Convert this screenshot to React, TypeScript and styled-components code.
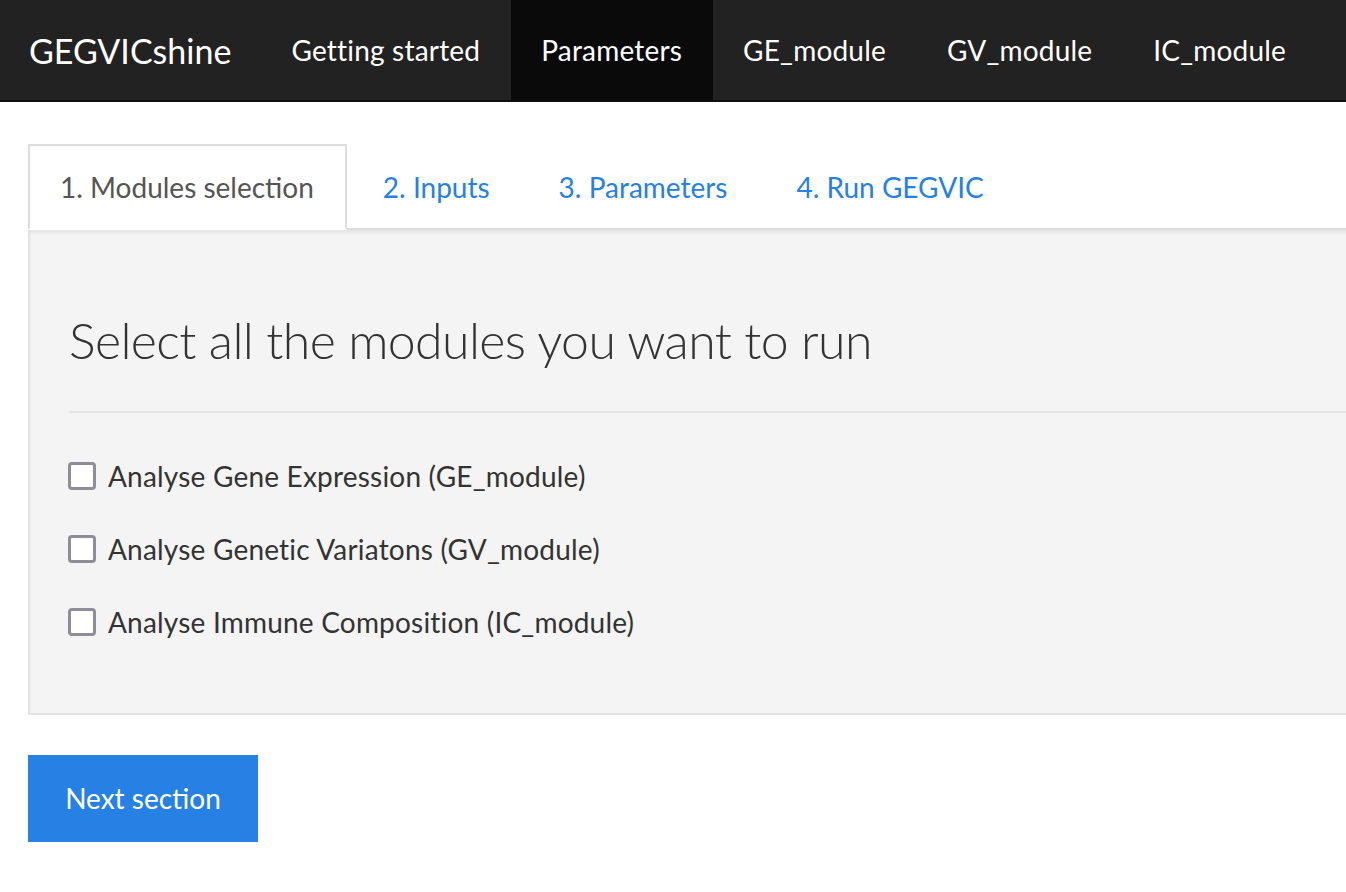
import React, { useState } from "react";
import styled, { createGlobalStyle } from "styled-components";

const Global = createGlobalStyle`
  html, body { margin: 0; padding: 0; background: #ffffff; overflow-x: hidden; }
  body { font-family: Lato, "Open Sans", sans-serif; color: #333333; }
  * { box-sizing: border-box; }
`;

const NavBar = styled.nav`
  display: flex;
  align-items: stretch;
  height: 102px;
  background: #222222;
  border-bottom: 2px solid #0f0f0f;
`;

const Brand = styled.a`
  display: flex;
  align-items: center;
  padding: 0 30px 0 29px;
  color: #ffffff;
  font-size: 34px;
  text-decoration: none;
`;

const NavLink = styled.a<{ $active?: boolean }>`
  display: flex;
  align-items: center;
  padding: 0 31px 0 30px;
  color: #ffffff;
  font-size: 28px;
  letter-spacing: 0.2px;
  text-decoration: none;
  background: ${(p) => (p.$active ? "#0a0a0a" : "transparent")};
`;

const Main = styled.main`
  margin-right: -40px;
  padding: 42px 0 0 28px;
`;

const TabBar = styled.ul`
  display: flex;
  margin: 0;
  padding: 0;
  list-style: none;
  border-bottom: 2px solid #dddddd;
`;

const Tab = styled.li<{ $active?: boolean }>`
  display: flex;
  align-items: center;
  height: 86px;
  margin: 0 4px -2px 0;
  padding: 0 31px 0 30px;
  font-size: 28px;
  border: 2px solid ${(p) => (p.$active ? "#dddddd" : "transparent")};
  border-bottom-color: ${(p) => (p.$active ? "#ffffff" : "transparent")};
  background: ${(p) => (p.$active ? "#ffffff" : "transparent")};
  color: ${(p) => (p.$active ? "#555555" : "#2780e3")};
  cursor: pointer;
`;

const Well = styled.section`
  background: #f4f4f4;
  border: 2px solid #e3e3e3;
  border-top: none;
  box-shadow: inset 0 3px 3px rgba(0, 0, 0, 0.06);
  padding: 40px 38px 38px 39px;
`;

const Title = styled.h2`
  margin: 38px 0 39px;
  font-size: 50px;
  line-height: 64px;
  letter-spacing: -0.6px;
  font-weight: 300;
  color: #333333;
`;

const Rule = styled.hr`
  margin: 0;
  border: none;
  border-top: 2px solid #e5e5e5;
`;

const Options = styled.div`
  display: flex;
  flex-direction: column;
  margin: 26px 0 17px;
`;

const Option = styled.label`
  display: flex;
  align-items: center;
  gap: 12px;
  height: 73px;
  font-size: 28px;
  letter-spacing: 0.2px;
  color: #333333;
  cursor: pointer;
`;

const Box = styled.input`
  appearance: none;
  margin: 0 0 0 -1px;
  width: 28px;
  height: 28px;
  border: 3px solid #8f8e98;
  border-radius: 4px;
  background: #ffffff;
  cursor: pointer;
  &:checked {
    background: #2780e3;
    border-color: #2780e3;
  }
`;

const NextButton = styled.button`
  display: flex;
  align-items: center;
  justify-content: center;
  margin-top: 40px;
  width: 230px;
  height: 87px;
  padding-bottom: 3px;
  border: none;
  background: #2780e3;
  color: #ffffff;
  font-family: inherit;
  font-size: 28px;
  cursor: pointer;
`;

const navItems = ["Getting started", "Parameters", "GE_module", "GV_module", "IC_module"];
const tabs = ["1. Modules selection", "2. Inputs", "3. Parameters", "4. Run GEGVIC"];
const options = [
  "Analyse Gene Expression (GE_module)",
  "Analyse Genetic Variatons (GV_module)",
  "Analyse Immune Composition (IC_module)",
];

export default function App() {
  const [checked, setChecked] = useState<boolean[]>([false, false, false]);
  return (
    <>
      <Global />
      <NavBar>
        <Brand>GEGVICshine</Brand>
        {navItems.map((n) => (
          <NavLink key={n} $active={n === "Parameters"}>
            {n}
          </NavLink>
        ))}
      </NavBar>
      <Main>
        <TabBar>
          {tabs.map((t, i) => (
            <Tab key={t} $active={i === 0}>
              {t}
            </Tab>
          ))}
        </TabBar>
        <Well>
          <Title>Select all the modules you want to run</Title>
          <Rule />
          <Options>
            {options.map((o, i) => (
              <Option key={o}>
                <Box
                  type="checkbox"
                  checked={checked[i]}
                  onChange={() => setChecked(checked.map((c, j) => (j === i ? !c : c)))}
                />
                {o}
              </Option>
            ))}
          </Options>
        </Well>
        <NextButton>Next section</NextButton>
      </Main>
    </>
  );
}
